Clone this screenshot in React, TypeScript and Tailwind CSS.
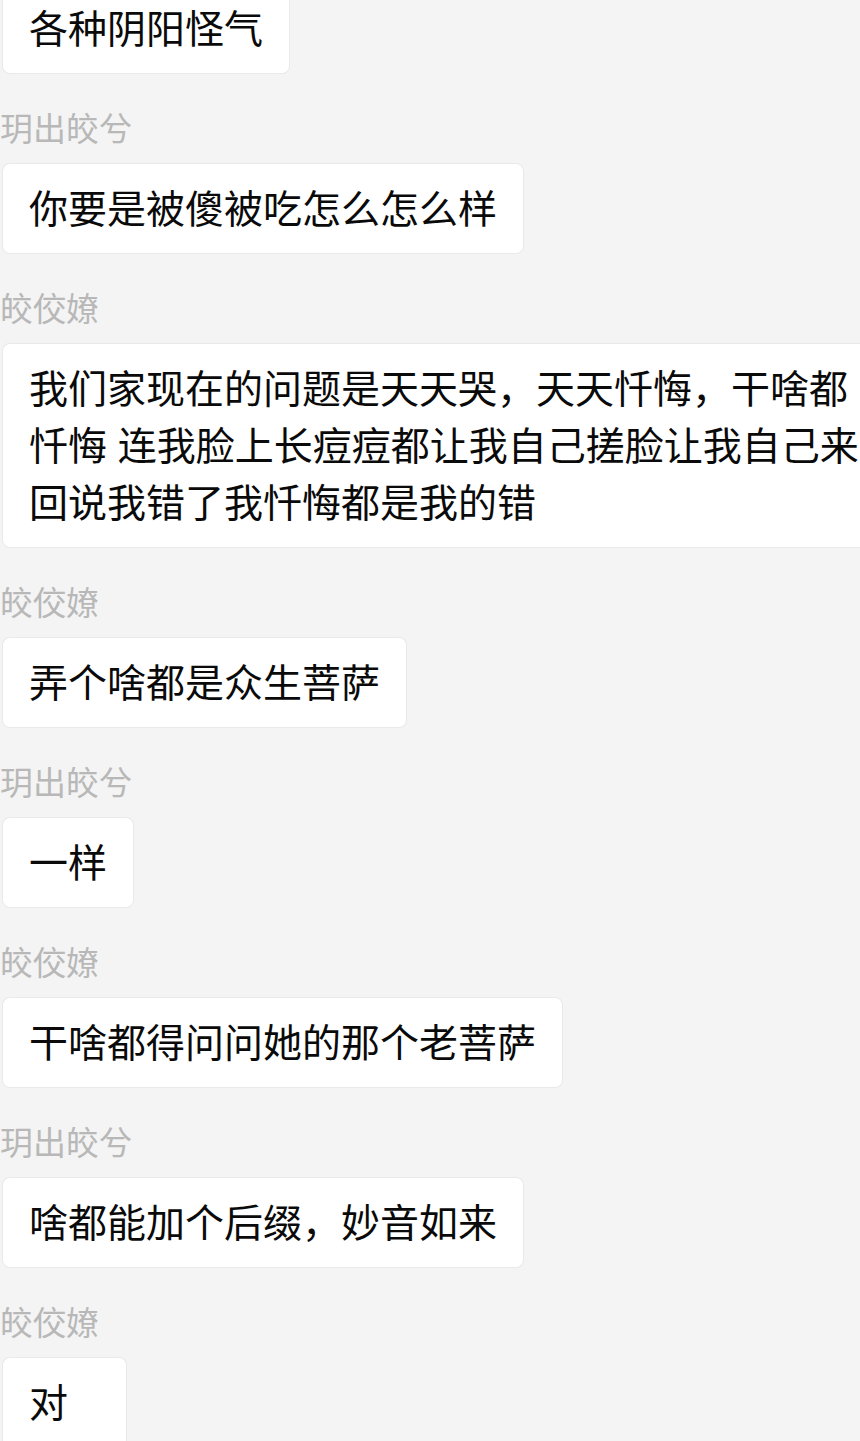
const A = '玥出皎兮';
const B = '皎佼嫽';

const messages: { name?: string; text: string }[] = [
  { text: '各种阴阳怪气' },
  { name: A, text: '你要是被傻被吃怎么怎么样' },
  {
    name: B,
    text: '我们家现在的问题是天天哭，天天忏悔，干啥都忏悔 连我脸上长痘痘都让我自己搓脸让我自己来回说我错了我忏悔都是我的错',
  },
  { name: B, text: '弄个啥都是众生菩萨' },
  { name: A, text: '一样' },
  { name: B, text: '干啥都得问问她的那个老菩萨' },
  { name: A, text: '啥都能加个后缀，妙音如来' },
  { name: B, text: '对' },
];

function Bubble({ text }: { text: string }) {
  return (
    <div className="relative w-max max-w-[900px] min-w-[123px] rounded-[7px] bg-white px-[26px] pt-[17px] pb-[15px] text-[39px] leading-[57px] text-[#0a0a0a] shadow-[0_0_0_1px_#e9e9e9]">
      {text}
    </div>
  );
}

export default function App() {
  return (
    <div
      className="min-h-screen overflow-hidden bg-[#f4f4f4] pl-[3px]"
      style={{ fontFamily: '"Liberation Sans", "Noto Sans CJK SC", sans-serif' }}
    >
      <div className="-mt-[16px] flex flex-col">
        {messages.map((m, i) => (
          <div key={i} className={i === 0 ? '' : 'mt-[37px]'}>
            {m.name && (
              <div className="-ml-[3px] mb-[14px] text-[33px] leading-[40px] text-[#b8b8b8]">
                {m.name}
              </div>
            )}
            <Bubble text={m.text} />
          </div>
        ))}
      </div>
    </div>
  );
}
